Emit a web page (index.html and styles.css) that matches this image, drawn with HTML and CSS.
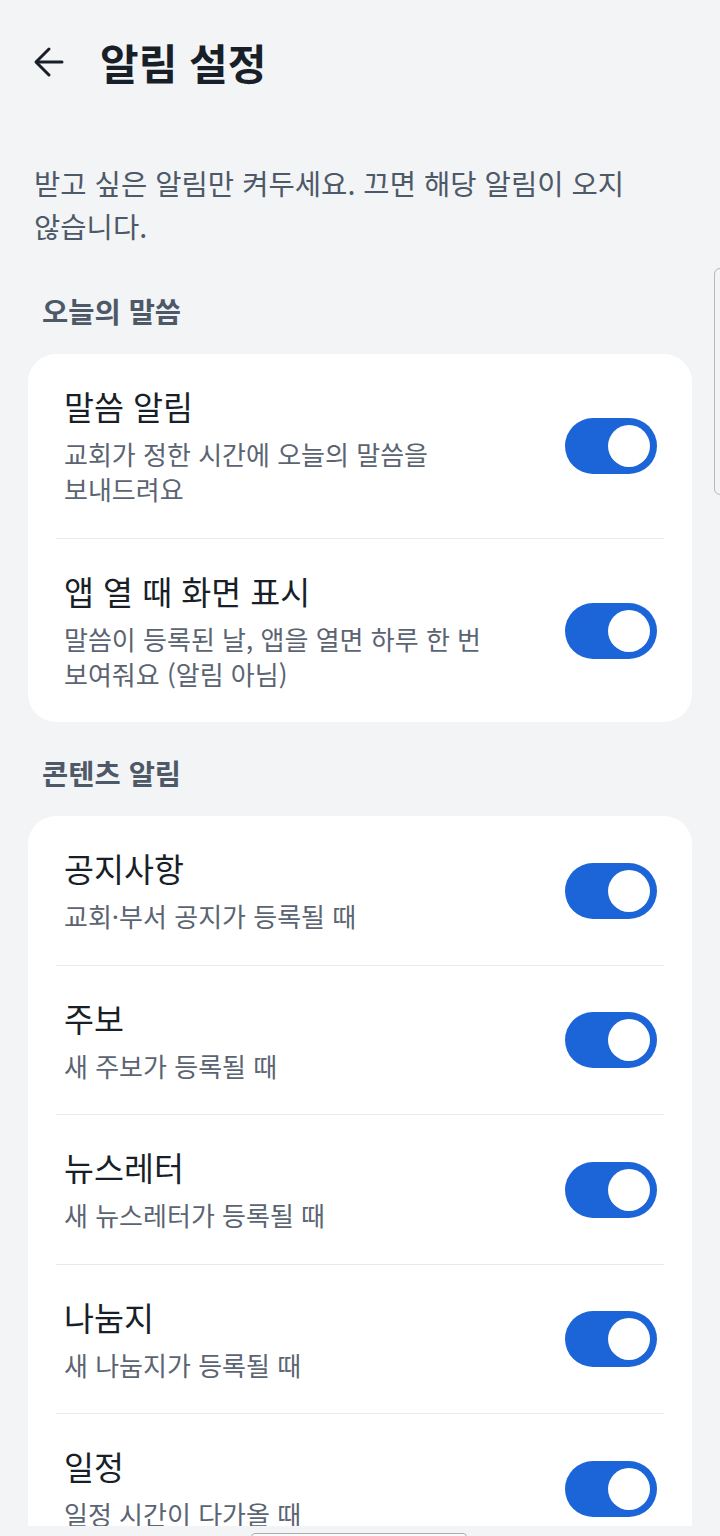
FILE: index.html
```html
<!DOCTYPE html>
<html lang="ko">
<head>
<meta charset="utf-8">
<title>알림 설정</title>
<link rel="stylesheet" href="styles.css">
</head>
<body>
<div class="page">
  <header class="header">
    <button class="back" aria-label="뒤로">
      <svg width="32" height="32" viewBox="0 0 32 32" fill="none" stroke="#191f28" stroke-width="3" stroke-linecap="round" stroke-linejoin="round">
        <path d="M29 16H4"/>
        <path d="M16 3L3 16l13 13"/>
      </svg>
    </button>
    <h1 class="title">알림 설정</h1>
  </header>

  <p class="desc">받고 싶은 알림만 켜두세요. 끄면 해당 알림이 오지 않습니다.</p>

  <h2 class="section first">오늘의 말씀</h2>
  <div class="card">
    <div class="row">
      <div class="text">
        <div class="row-title">말씀 알림</div>
        <div class="row-sub">교회가 정한 시간에 오늘의 말씀을 보내드려요</div>
      </div>
      <div class="toggle on"><span class="knob"></span></div>
    </div>
    <div class="row">
      <div class="text">
        <div class="row-title">앱 열 때 화면 표시</div>
        <div class="row-sub">말씀이 등록된 날, 앱을 열면 하루 한 번 보여줘요 (알림 아님)</div>
      </div>
      <div class="toggle on"><span class="knob"></span></div>
    </div>
  </div>

  <h2 class="section">콘텐츠 알림</h2>
  <div class="card">
    <div class="row">
      <div class="text">
        <div class="row-title">공지사항</div>
        <div class="row-sub">교회·부서 공지가 등록될 때</div>
      </div>
      <div class="toggle on"><span class="knob"></span></div>
    </div>
    <div class="row">
      <div class="text">
        <div class="row-title">주보</div>
        <div class="row-sub">새 주보가 등록될 때</div>
      </div>
      <div class="toggle on"><span class="knob"></span></div>
    </div>
    <div class="row">
      <div class="text">
        <div class="row-title">뉴스레터</div>
        <div class="row-sub">새 뉴스레터가 등록될 때</div>
      </div>
      <div class="toggle on"><span class="knob"></span></div>
    </div>
    <div class="row">
      <div class="text">
        <div class="row-title">나눔지</div>
        <div class="row-sub">새 나눔지가 등록될 때</div>
      </div>
      <div class="toggle on"><span class="knob"></span></div>
    </div>
    <div class="row">
      <div class="text">
        <div class="row-title">일정</div>
        <div class="row-sub">일정 시간이 다가올 때</div>
      </div>
      <div class="toggle on"><span class="knob"></span></div>
    </div>
  </div>
</div>
<div class="scroll-hint"></div>
<div class="bottom-bar"><span class="handle"></span></div>
</body>
</html>
```

FILE: styles.css
```css
* { box-sizing: border-box; }
html, body {
  margin: 0;
  padding: 0;
  height: 1536px;
  overflow: hidden;
  background: #f2f4f6;
  font-family: "Noto Sans CJK KR", "Noto Sans", sans-serif;
  color: #191f28;
  word-break: keep-all;
}
.page {
  display: flex;
  flex-direction: column;
}
.header {
  height: 124px;
  display: flex;
  align-items: center;
  padding-left: 33px;
  gap: 35px;
}
.back {
  border: 0;
  background: none;
  padding: 0;
  width: 32px;
  height: 32px;
  display: flex;
  align-items: center;
  justify-content: center;
}
.title {
  margin: 0;
  font-size: 42px;
  font-weight: 700;
  line-height: 50px;
  letter-spacing: 0;
}
.desc {
  margin: 37px 60px 0 34px;
  font-size: 28.6px;
  line-height: 43px;
  color: #4e5968;
}
.section {
  margin: 33px 0 25px 42px;
  font-size: 28.5px;
  font-weight: 700;
  line-height: 36px;
  color: #4e5968;
}
.section.first {
  margin-top: 46px;
}
.card {
  margin: 0 28px;
  background: #ffffff;
  border-radius: 28px;
  padding: 0 28px;
}
.row {
  display: flex;
  align-items: center;
  justify-content: space-between;
  gap: 24px;
  padding: 32px 7px 31.5px 8px;
  border-bottom: 1.5px solid #e8ebee;
}
.row:last-child {
  border-bottom: 0;
}
.text {
  flex: 1;
  min-width: 0;
  display: flex;
  flex-direction: column;
  gap: 10px;
}
.row-title {
  font-size: 32.6px;
  line-height: 40px;
  color: #191f28;
}
.row-sub {
  font-size: 26px;
  line-height: 35px;
  color: #5b6472;
  max-width: 440px;
}
.toggle {
  flex: none;
  width: 92px;
  height: 56px;
  border-radius: 28px;
  background: #cfd4da;
  display: flex;
  align-items: center;
  padding: 0 7px;
}
.toggle.on {
  background: #1b65d8;
  justify-content: flex-end;
}
.knob {
  width: 42px;
  height: 42px;
  border-radius: 50%;
  background: #ffffff;
}
.scroll-hint {
  position: absolute;
  right: -6px;
  top: 268px;
  width: 12px;
  height: 227px;
  border: 1.5px solid #b5b9be;
  border-radius: 6px;
  background: #f2f4f6;
}
.bottom-bar {
  position: absolute;
  left: 0;
  right: 0;
  bottom: 0;
  height: 10px;
  background: #f2f4f6;
}
.handle {
  position: absolute;
  left: 251px;
  top: 7px;
  width: 216px;
  height: 8px;
  border: 1.5px solid #a9adb2;
  border-radius: 4px;
  background: #fafafa;
}
```
